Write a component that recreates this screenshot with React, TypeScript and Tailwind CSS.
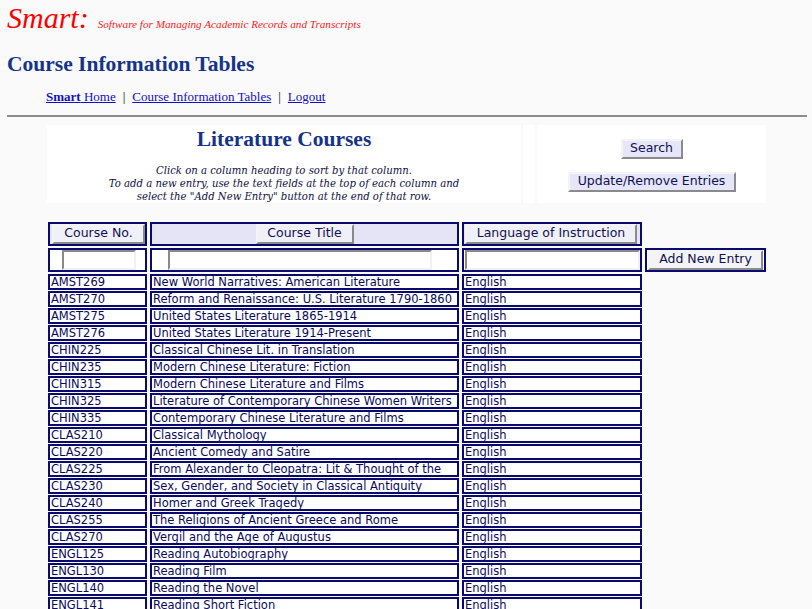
import React from "react";

const rows: [string, string][] = [
  ["AMST269", "New World Narratives: American Literature"],
  ["AMST270", "Reform and Renaissance: U.S. Literature 1790-1860"],
  ["AMST275", "United States Literature 1865-1914"],
  ["AMST276", "United States Literature 1914-Present"],
  ["CHIN225", "Classical Chinese Lit. in Translation"],
  ["CHIN235", "Modern Chinese Literature: Fiction"],
  ["CHIN315", "Modern Chinese Literature and Films"],
  ["CHIN325", "Literature of Contemporary Chinese Women Writers"],
  ["CHIN335", "Contemporary Chinese Literature and Films"],
  ["CLAS210", "Classical Mythology"],
  ["CLAS220", "Ancient Comedy and Satire"],
  ["CLAS225", "From Alexander to Cleopatra: Lit & Thought of the"],
  ["CLAS230", "Sex, Gender, and Society in Classical Antiquity"],
  ["CLAS240", "Homer and Greek Tragedy"],
  ["CLAS255", "The Religions of Ancient Greece and Rome"],
  ["CLAS270", "Vergil and the Age of Augustus"],
  ["ENGL125", "Reading Autobiography"],
  ["ENGL130", "Reading Film"],
  ["ENGL140", "Reading the Novel"],
  ["ENGL141", "Reading Short Fiction"],
];

const serif = "font-['Liberation_Serif',serif]";
const sans = "font-['DejaVu_Sans',sans-serif]";

/** Raised form button, old-school bevel. */
function Btn({ label, className = "" }: { label: string; className?: string }) {
  return (
    <button
      type="button"
      className={`${sans} flex h-[20px] items-center justify-center border-2 border-t-[#f4f4f4] border-l-[#f4f4f4] border-r-[#8a8a8a] border-b-[#8a8a8a] text-[12.5px] leading-none text-[#101050] ${className}`}
    >
      {label}
    </button>
  );
}

function Field({ className = "" }: { className?: string }) {
  return (
    <div
      className={`h-[20px] border-2 border-t-[#8a8a8a] border-l-[#8a8a8a] border-r-[#f0f0f0] border-b-[#f0f0f0] bg-white ${className}`}
    />
  );
}

const cell = "border-2 border-[#0a0a6e]";
const dataCell = `${cell} h-[16px] overflow-hidden whitespace-nowrap bg-white px-[1px] text-[11.5px] leading-[12px] text-[#0a0a5a]`;

export default function App() {
  return (
    <div className={`min-h-[609px] bg-[#fafafa] px-[7px] ${serif}`}>
      <div className="flex items-baseline pt-[3px]">
        <span className="text-[30px] italic leading-none text-[#ff0000]">Smart:</span>
        <span className="ml-[9px] text-[11.2px] italic text-[#ff1a1a]">
          Software for Managing Academic Records and Transcripts
        </span>
      </div>

      <h1 className="mt-[21px] text-[21.5px] font-bold leading-none text-[#15338a]">
        Course Information Tables
      </h1>

      <nav className="mt-[14px] pl-[39px] text-[13px] leading-[13px] text-black">
        <a className="text-[#1010c8] underline">
          <b>Smart</b> Home
        </a>
        <span className="mx-[7px]">|</span>
        <a className="text-[#1010c8] underline">Course Information Tables</a>
        <span className="mx-[7px]">|</span>
        <a className="text-[#1010c8] underline">Logout</a>
      </nav>

      <div className="mt-[12px] h-[2px] w-[800px] bg-[#8c8c8c]" />

      <div className="ml-[40px] mt-[8px] flex h-[78px] gap-[2px]">
        <div className="flex w-[474px] flex-col items-center bg-white">
          <h2 className="mt-[2px] text-[21.5px] font-bold leading-[24px] text-[#15338a]">
            Literature Courses
          </h2>
          <p className="mt-[13px] text-center font-['DejaVu_Serif',serif] text-[10.1px] italic leading-[13px] text-[#101040]">
            Click on a column heading to sort by that column.
            <br />
            To add a new entry, use the text fields at the top of each column and
            <br />
            select the "Add New Entry" button at the end of that row.
          </p>
        </div>
        <div className="w-[12px] bg-white" />
        <div className="flex w-[229px] flex-col items-center bg-white">
          <Btn label="Search" className="mt-[14px] w-[62px] bg-[#e6e6fa]" />
          <Btn label="Update/Remove Entries" className="mt-[13px] w-[168px] bg-[#e6e6fa]" />
        </div>
      </div>

      <div className={`ml-[41px] mt-[19px] ${sans}`}>
        <div className="grid grid-cols-[99px_309px_180px] gap-x-[3px]">
          <div className={`${cell} flex h-[24px] items-center bg-[#e4e4f6] pl-[2px]`}>
            <Btn label="Course No." className="w-[93px] bg-[#f0f0f8]" />
          </div>
          <div className={`${cell} flex h-[24px] items-center justify-center bg-[#e4e4f6]`}>
            <Btn label="Course Title" className="w-[98px] bg-[#f0f0f8]" />
          </div>
          <div className={`${cell} flex h-[24px] items-center bg-[#e4e4f6] pl-[1px]`}>
            <Btn label="Language of Instruction" className="w-[172px] bg-[#f0f0f8]" />
          </div>
        </div>

        <div className="mt-[2px] grid grid-cols-[99px_309px_180px_121px] gap-x-[3px]">
          <div className={`${cell} flex h-[24px] items-center bg-white pl-[12px]`}>
            <Field className="w-[74px]" />
          </div>
          <div className={`${cell} flex h-[24px] items-center bg-white pl-[16px]`}>
            <Field className="w-[264px]" />
          </div>
          <div className={`${cell} flex h-[24px] items-center bg-white pl-[1px]`}>
            <Field className="w-[175px]" />
          </div>
          <div className={`${cell} flex h-[24px] items-center bg-white pl-[1px]`}>
            <Btn label="Add New Entry" className="w-[115px] bg-[#f4f4f8]" />
          </div>
        </div>

        <div className="mt-[2px] grid grid-cols-[99px_309px_180px] gap-x-[3px] gap-y-[1px]">
          {rows.map(([no, title]) => (
            <React.Fragment key={no}>
              <div className={dataCell}>{no}</div>
              <div className={dataCell}>{title}</div>
              <div className={dataCell}>English</div>
            </React.Fragment>
          ))}
        </div>
      </div>
    </div>
  );
}
